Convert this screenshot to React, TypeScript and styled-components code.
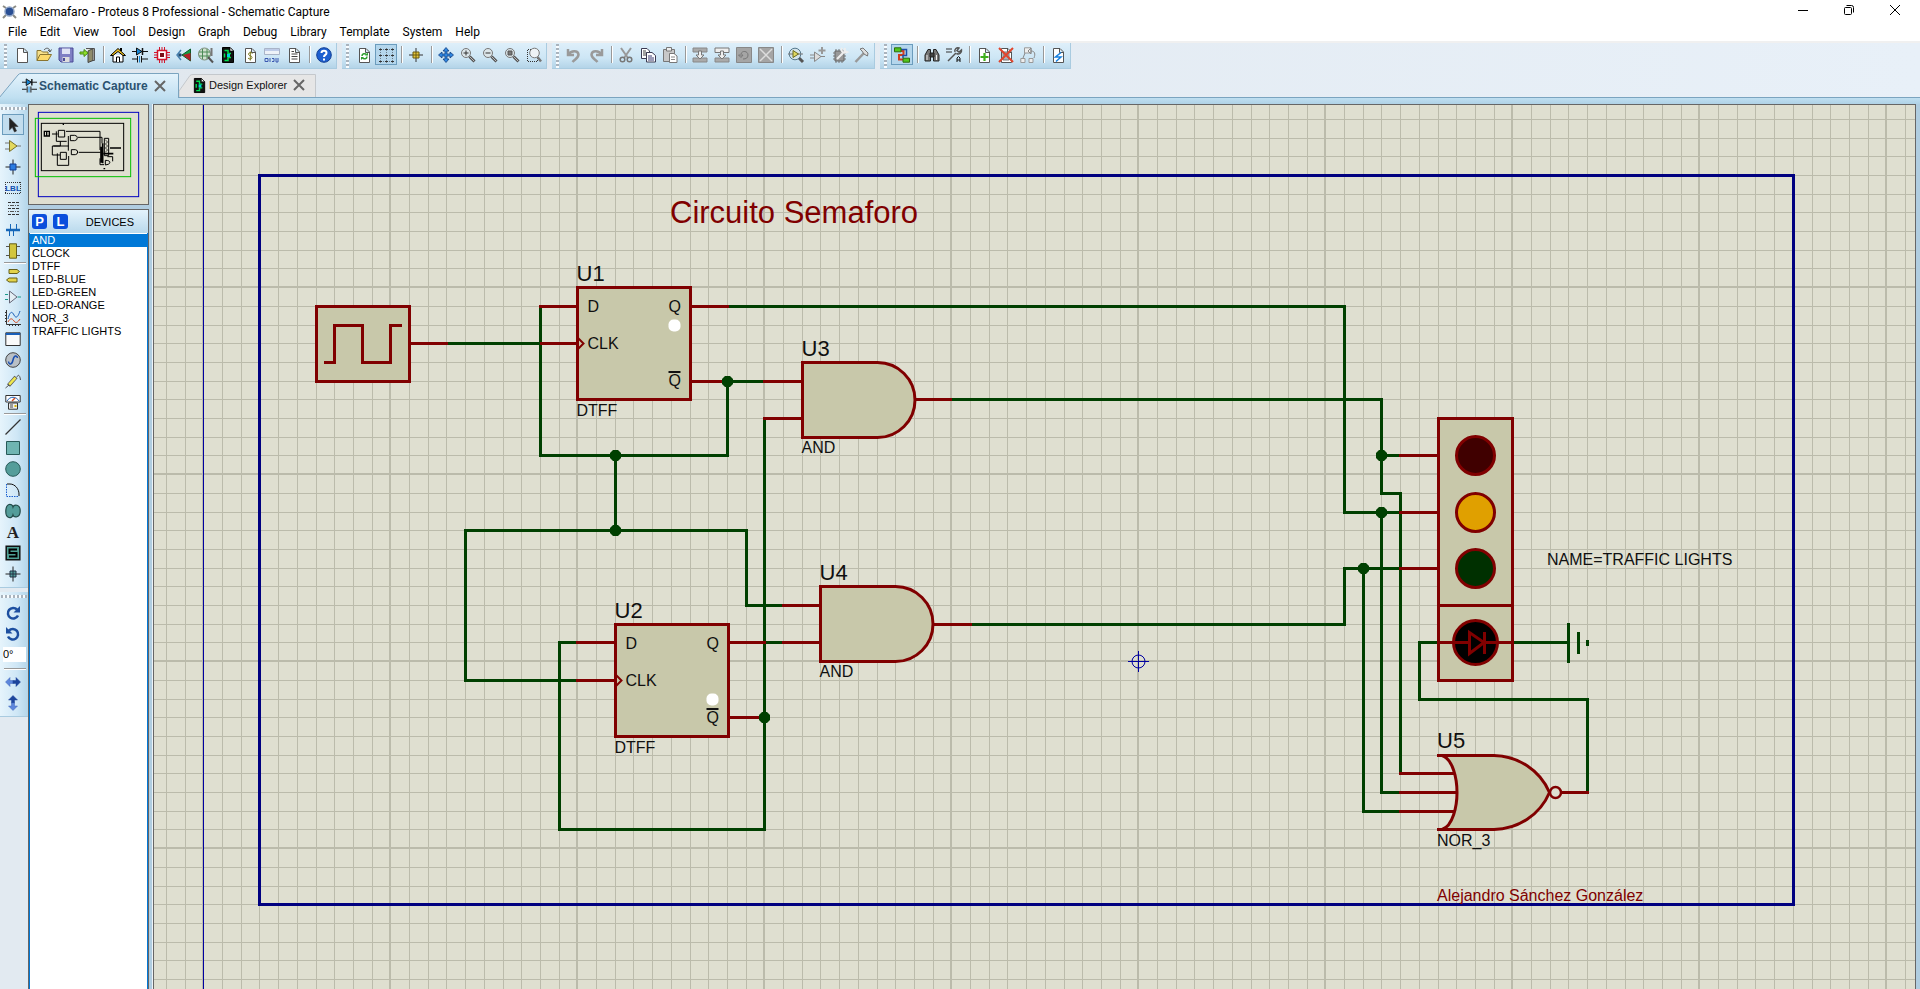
import React from "react";
import styled, { createGlobalStyle, css } from "styled-components";

const GlobalStyle = createGlobalStyle`
  * { box-sizing: border-box; }
  html, body, #root { height: 100%; }
  body { margin: 0; overflow: hidden; background: #fff; }
  button, input { font: inherit; color: inherit; margin: 0; padding: 0; border: 0; background: none; }
`;

const sans = `"Liberation Sans", Arial, sans-serif`;
const ui = `Roboto, "Segoe UI", sans-serif`;

/* ---------- frame ---------- */

const Shell = styled.div`
  display: flex;
  flex-direction: column;
  height: 100vh;
  font-family: ${sans};
  font-size: 11px;
  color: #000;
`;

const TitleBar = styled.header`
  display: flex;
  align-items: center;
  gap: 6px;
  flex: none;
  height: 23px;
  padding-left: 2px;
  background: #fff;
`;

const AppTitle = styled.h1`
  flex: 1;
  margin: 0;
  font: 400 12px/20px ${ui};
`;

const WindowButtons = styled.div`
  display: flex;
  align-self: flex-start;
  margin-right: 2px;
`;

const WindowButton = styled.button`
  display: grid;
  place-items: center;
  width: 46px;
  height: 20px;
`;

const MenuBar = styled.nav`
  display: flex;
  gap: 13px;
  flex: none;
  height: 20px;
  padding-left: 8px;
  background: #fff;
  border-bottom: 2px solid #f0f0f0;
`;

const MenuItem = styled.button`
  padding-top: 1px;
  font: 400 12px/17px ${ui};
  white-space: nowrap;
`;

const ToolRow = styled.div`
  display: flex;
  gap: 5px;
  flex: none;
  height: 30px;
  background: linear-gradient(90deg, #e0e7ee, #e8f0f8);
`;

const Bar = styled.div`
  display: flex;
  align-items: center;
  height: 26px;
  padding-right: 1px;
  border-right: 1px solid #a9cbe0;
  border-bottom: 1px solid #a9cbe0;
  background: linear-gradient(#deeffa, #cde6f5 60%, #b4d4e8);
`;

const Grip = styled.span<{ $across?: boolean }>`
  flex: none;
  ${(p) =>
    p.$across
      ? css`
          width: 26px;
          height: 3px;
          margin: 3px 0 4px 1px;
          background: repeating-linear-gradient(90deg, #a9b3bd 0 2px, #f8fcff 2px 4px);
        `
      : css`
          width: 3px;
          height: 24px;
          margin: 0 4px;
          background: repeating-linear-gradient(#a9b3bd 0 2px, #f8fcff 2px 4px);
        `}
`;

const Divider = styled.span<{ $across?: boolean }>`
  flex: none;
  background: #999;
  ${(p) =>
    p.$across
      ? css`
          width: 22px;
          height: 1px;
          margin: 1px 0 2px 4px;
          box-shadow: 0 1px #fff;
        `
      : css`
          width: 1px;
          height: 17px;
          margin: 0 3px 2px 4px;
          box-shadow: 1px 0 #fff;
        `}
`;

const ToolButton = styled.button<{ $on?: boolean }>`
  display: grid;
  place-items: center;
  flex: none;
  width: 22px;
  height: 21px;
  margin-bottom: 2px;
  border: 1px solid ${(p) => (p.$on ? "#6b9cbd" : "transparent")};
  background: ${(p) => (p.$on ? "#b4d6ec" : "none")};
`;

const ModeButton = styled(ToolButton)`
  margin: 0 0 0 2px;
  background: ${(p) => (p.$on ? "#c2ddee" : "none")};
`;

const TabRow = styled.div`
  display: flex;
  flex: none;
  height: 25px;
  border-bottom: 1px solid #7ba4bf;
  background: linear-gradient(90deg, #e0e7ee, #e8f0f8);
`;

const Tab = styled.div<{ $active?: boolean }>`
  position: relative;
  display: flex;
  align-items: center;
  gap: 1px;
  height: ${(p) => (p.$active ? 25 : 24)}px;
  width: ${(p) => (p.$active ? 179 : 137)}px;
  padding-left: ${(p) => (p.$active ? 22 : 13)}px;
  color: ${(p) => (p.$active ? "#2b5270" : "#111")};
  font: ${(p) => (p.$active ? "700 12px" : "400 11px")} / 24px ${sans};
  white-space: nowrap;
`;

const TabShape = styled.svg`
  position: absolute;
  inset: 0;
  width: 100%;
  height: 100%;
`;

const TabButton = styled.button`
  position: relative;
  display: flex;
  align-items: center;
  gap: 2px;
`;

const TabClose = styled.button`
  position: relative;
  display: grid;
  place-items: center;
  width: 22px;
  height: 22px;
`;

const Band = styled.div`
  flex: none;
  height: 6px;
  background: linear-gradient(#bfdff1, #b0d2e6);
`;

const Body = styled.main`
  display: flex;
  flex: 1;
  min-height: 0;
  background: #b0cde0;
`;

const ModeRail = styled.div`
  display: flex;
  flex-direction: column;
  flex: none;
  width: 28px;
  background: #e2eaf1;
`;

const ModeGroup = styled.div`
  display: flex;
  flex-direction: column;
  margin-bottom: 4px;
  padding-bottom: 3px;
  border-bottom: 1px solid #a9cbe0;
  background: linear-gradient(90deg, #e6f4fc, #cfe7f6 60%, #b4d6ea);
`;

const AngleInput = styled.input`
  width: 23px;
  height: 15px;
  margin: 3px 0 5px 3px;
  background: #fff;
  font: 400 11px/15px ${sans};
`;

const SidePanel = styled.aside`
  display: flex;
  flex-direction: column;
  gap: 4px;
  flex: none;
  width: 121px;
`;

const Overview = styled.div`
  flex: none;
  height: 101px;
  border: 1px solid #666;
  background: #dfdfd0;
`;

const DevicePanel = styled.section`
  display: flex;
  flex-direction: column;
  flex: 1;
  border: 1px solid #666;
  border-bottom: 0;
`;

const DeviceHeader = styled.div`
  display: flex;
  align-items: center;
  flex: none;
  height: 23px;
  padding-left: 3px;
  gap: 6px;
  background: linear-gradient(#e4f3fc, #b9d9ec);
`;

const LetterButton = styled.button`
  width: 15px;
  height: 15px;
  border-radius: 3px;
  background: #0a4fdc;
  color: #fff;
  font: 700 13px/15px ${sans};
  text-align: center;
`;

const DeviceTitle = styled.h2`
  flex: 1;
  margin: 0 14px 0 0;
  text-align: right;
  font: 400 11px/20px ${sans};
`;

const DeviceList = styled.ul`
  flex: 1;
  margin: 0;
  padding: 1px 0 0;
  list-style: none;
  border: solid #0078d7;
  border-width: 0 1px;
  background: #fff;
`;

const Device = styled.li<{ $selected?: boolean }>`
  padding-left: 2px;
  font-size: 11px;
  line-height: 13px;
  white-space: nowrap;
  color: ${(p) => (p.$selected ? "#fff" : "#000")};
  background: ${(p) => (p.$selected ? "#0078d7" : "none")};
`;

const CanvasFrame = styled.section`
  flex: 1;
  min-width: 0;
  margin: 0 4px;
  border: 1px solid #666;
  border-bottom: 0;
  box-shadow: -1px 0 #eef4f8;
  background: #dfdfd0;
`;

const Drawing = styled.svg`
  display: block;
  width: 100%;
  height: 100%;
`;

const Label = styled.text<{ $size?: number; $ink?: string }>`
  font-family: ${sans};
  font-size: ${(p) => p.$size ?? 16}px;
  fill: ${(p) => p.$ink ?? "#101010"};
`;

/* ---------- icons, drawn on a 16 unit grid ---------- */

const IconSvg = styled.svg`
  overflow: visible;
`;

const Icon = ({ children, size = 18 }: { children: React.ReactNode; size?: number }) => (
  <IconSvg width={size} height={size} viewBox="0 0 16 16" fill="none" stroke="#444" aria-hidden>
    {children}
  </IconSvg>
);

const sheet = <path d="M3.5 1.5H10L13.5 5V15.5H3.5ZM9.5 1.5V5.5H13.5" fill="#fff" stroke="#555" />;
const lens = (
  <>
    <path d="M9.5 9.5L14.5 14.5" stroke="#555" strokeWidth="3" />
    <path d="M10 10L14 14" stroke="#bbb" />
    <circle cx="6" cy="6" r="4.5" fill="#dce6ea" stroke="#777" />
  </>
);
const circuitSheet = (
  <>
    <path d="M2.5 .5H10L13.5 4V15.5H2.5Z" fill="#111" stroke="#000" />
    <path d="M10 .5V4H13.5Z" fill="#fff" stroke="#000" strokeWidth=".6" />
    <path d="M4.5 3.5H8V6.5H11M11 10.5H8V13.5H4.5M4.5 6.5V10.5" stroke="#00e050" strokeWidth="1.5" />
    <path d="M7 7h3v3h-3z" fill="#00d0e0" stroke="none" />
  </>
);
const diodeCap = (
  <>
    <path d="M0 4.5H16M0 12H5M10 12H16" stroke="#111" />
    <path d="M4.5 1V8L10 4.5Z" fill="#1688d8" stroke="#111" />
    <path d="M10.5 1V8" stroke="#111" strokeWidth="1.5" />
    <path d="M5.5 9V15.5M9.5 9V15.5" stroke="#111" />
    <path d="M7.5 9V15.5" stroke="#1688d8" />
  </>
);
const downArrow = <path d="M6.5 4H9.5V8H12L8 12L4 8H6.5Z" fill="#eee" stroke="#777" />;

const icons: Record<string, React.ReactNode> = {
  New: sheet,
  Open: (
    <>
      <path d="M1 13.5V3.5H5L6.5 5H12V7" fill="#f6e08a" stroke="#8a7530" />
      <path d="M1 13.5L4 7.5H15.5L12 13.5Z" fill="#fbd96a" stroke="#8a7530" />
      <path d="M8 3C10 .5 13 .5 14 4M12 3L14 5L15.5 2.5" stroke="#555" />
    </>
  ),
  Save: (
    <>
      <path d="M1 1H15V15H3L1 13Z" fill="#7f7fc4" stroke="#4b4b96" />
      <path d="M4 1.5H12V7H4Z" fill="#dfe3f5" stroke="none" />
      <path d="M4.5 10H11.5V15H4.5Z" fill="#ddd" stroke="none" />
      <path d="M6 11V14" stroke="#4b4b96" strokeWidth="2" />
    </>
  ),
  Close: (
    <>
      <path d="M6 1.5H14.5V13.5H11" fill="#e8e8e0" stroke="#555" />
      <path d="M8 4L13 1.5V13.5L8 15.5Z" fill="#8f8b6a" stroke="#444" />
      <path d="M0 5H4V2.5L8 6L4 9.5V7H0Z" fill="#8ee02a" stroke="#4a8a10" />
    </>
  ),
  Home: (
    <>
      <path d="M3 8V15H13V8" fill="#fff" stroke="#000" />
      <path d="M.5 8.5L8 1.5L15.5 8.5H13L8 4.5L3 8.5Z" fill="#f7c51e" stroke="#000" />
      <path d="M11 1V4" stroke="#000" strokeWidth="2" />
      <path d="M6.5 15V10H9.5V15" fill="#fff" stroke="#000" />
    </>
  ),
  "Schematic Capture": diodeCap,
  "PCB Layout": (
    <>
      <path d="M5.5 0V16M8 0V16M10.5 0V16M0 5.5H16M0 8H16M0 10.5H16" stroke="#d2162c" />
      <path d="M3.5 3.5H12.5V12.5H3.5Z" fill="#fff" stroke="#d2162c" strokeWidth="1.5" />
      <path d="M6 6H10V10H6Z" fill="#7a0d16" stroke="none" />
    </>
  ),
  "3D Visualizer": (
    <>
      <path d="M6 8L14.5 2V14Z" fill="#169c43" stroke="#0a5c2a" />
      <path d="M7 8L14.5 6V14Z" fill="#b4202a" stroke="none" />
      <path d="M5 3L1 8L5 13" stroke="#4a82b0" strokeWidth="1.5" />
      <circle cx="4" cy="8" r="1.8" fill="#1d4870" stroke="none" />
    </>
  ),
  "Gerber Viewer": (
    <>
      <circle cx="6.5" cy="7" r="6" fill="#cfe0cf" stroke="#7a8c7a" />
      <path d="M1 5H12M1 9H12M4.5 2V12M9 2V12" stroke="#4a8a55" />
      <path d="M13.5 1V9" stroke="#777" strokeWidth="2" />
      <path d="M10 10L15 15.5" stroke="#555" strokeWidth="2" />
    </>
  ),
  "Design Explorer": circuitSheet,
  "Bill of Materials": (
    <>
      {sheet}
      <path d="M10.5 6.5C9.5 5 6 5.5 6.5 7.5C7 9 10 8.5 10 10.5C10 12.5 7 12.5 6 11M8.3 4.5V13.5" stroke="#7c7a20" />
    </>
  ),
  "Source Code": (
    <>
      <path d="M.5 1.5H15.5V7.5H.5Z" fill="#eef2f8" stroke="#a9b4c8" />
      <path d="M1 3H15" stroke="#8fa5d8" />
      <path d="M1 11.5H4V14.5H1ZM6 11V15M8 11.5H10V14.5H8M12 11V15H14V11" stroke="#3b58b0" />
    </>
  ),
  "Project Notes": (
    <>
      {sheet}
      <path d="M5.5 7H11.5M5.5 9.5H11.5M5.5 12H11.5M5.5 4.5H8" />
    </>
  ),
  Help: (
    <>
      <circle cx="8" cy="8" r="7.3" fill="#1d5fd0" stroke="#123f94" />
      <path d="M5.5 6C5.5 3 10.5 3 10.5 6C10.5 8 8 7.8 8 10" stroke="#fff" strokeWidth="2" />
      <path d="M8 11.5V13.5" stroke="#fff" strokeWidth="2" />
    </>
  ),
  Redraw: (
    <>
      {sheet}
      <path d="M6 9C6 6.5 9 6 10.5 7.5M11 9.5C11 12 8 12.5 6.5 11" stroke="#2e9e2e" strokeWidth="1.5" />
      <path d="M9 8.5H12V5.5ZM8 10H5V13Z" fill="#2e9e2e" stroke="none" />
    </>
  ),
  "Toggle Grid": (
    <>
      <path d="M1 2.5H16M1 8.5H16M1 14.5H16M2.5 1V16M8.5 1V16M14.5 1V16" stroke="#6b7d8a" strokeDasharray="1 1" />
      <path d="M1 2.5H4M7 2.5H10M13 2.5H16M1 8.5H4M7 8.5H10M13 8.5H16M1 14.5H4M7 14.5H10M13 14.5H16" stroke="#333" />
    </>
  ),
  "False Origin": (
    <>
      <path d="M8 1V15M1 8H15" stroke="#333" />
      <path d="M5 5H11V11H5Z" fill="#e6c63a" stroke="#6b5a10" />
      <path d="M8 5V11M5 8H11" stroke="#6b5a10" />
    </>
  ),
  "Center at Cursor": (
    <path
      d="M8 .5L11 4H9V7H12V5L15.5 8L12 11V9H9V12H11L8 15.5L5 12H7V9H4V11L.5 8L4 5V7H7V4H5Z"
      fill="#2f86e0"
      stroke="#123f80"
      strokeWidth=".8"
    />
  ),
  "Zoom In": <>{lens}<path d="M3.5 6H8.5M6 3.5V8.5" stroke="#333" /></>,
  "Zoom Out": <>{lens}<path d="M3.5 6H8.5" stroke="#333" /></>,
  "Zoom All": <>{lens}<path d="M4 4H8V8H4Z" fill="#777" stroke="#555" /></>,
  "Zoom Area": (
    <>
      <path d="M9 2.5H1.5V14.5H11.5V11" stroke="#333" strokeDasharray="1 1" />
      <path d="M11.5 10L15 14.5" stroke="#777" strokeWidth="2.5" />
      <circle cx="8.5" cy="6" r="4.8" fill="#eef3f6" stroke="#777" />
    </>
  ),
  Undo: <path d="M2 2V8H8M2.5 7.5C5 3 12 3 12.5 7.5C12.5 11 9 12 6.5 15" stroke="#9a9a9a" strokeWidth="2.5" />,
  Redo: <path d="M14 2V8H8M13.5 7.5C11 3 4 3 3.5 7.5C3.5 11 7 12 9.5 15" stroke="#9a9a9a" strokeWidth="2.5" />,
  Cut: (
    <>
      <path d="M3 1L10 11M13 1L6 11" stroke="#999" strokeWidth="2" />
      <circle cx="4.5" cy="12.5" r="2.3" stroke="#777" strokeWidth="1.5" />
      <circle cx="11.5" cy="12.5" r="2.3" stroke="#777" strokeWidth="1.5" />
    </>
  ),
  Copy: (
    <>
      <path d="M1.5 1.5H7L9.5 4V11.5H1.5Z" fill="#fff" stroke="#3a3a52" />
      <path d="M3 4H6M3 6H7M3 8H6" />
      <path d="M6.5 5.5H12L15.5 8.5V15H6.5Z" fill="#fff" stroke="#3a3a52" />
      <path d="M8 9H12M8 11H14M8 13H14" stroke="#3a3a72" />
    </>
  ),
  Paste: (
    <>
      <path d="M1.5 2.5H12.5V14.5H1.5Z" fill="#c8c8c8" stroke="#777" />
      <path d="M4.5 .5H9.5V4H4.5Z" fill="#eee" stroke="#777" />
      <path d="M7.5 6.5H12L15 9V15.5H7.5Z" fill="#fff" stroke="#777" />
      <path d="M9 10H13M9 12.5H13" stroke="#888" />
    </>
  ),
  "Block Copy": (
    <>
      <path d="M1 1H15V5H1ZM1 11H15V15H1Z" fill="#aaa" stroke="#888" />
      {downArrow}
    </>
  ),
  "Block Move": (
    <>
      <path d="M1 1H15V5.5H1Z" fill="#eee" stroke="#777" />
      <path d="M1 11H15V15H1Z" fill="#aaa" stroke="#888" />
      {downArrow}
    </>
  ),
  "Block Rotate": (
    <>
      <path d="M.5 .5H15.5V15.5H.5Z" fill="#a5a5a5" stroke="#888" />
      <path d="M2.5 8H7L5 10.5ZM5 7C6 3 12 4 12 8C12 11 10 12 7 12" stroke="#777" />
    </>
  ),
  "Block Delete": (
    <>
      <path d="M.5 .5H15.5V15.5H.5Z" fill="#a5a5a5" stroke="#888" />
      <path d="M2 2L14 14M14 2L2 14" stroke="#ddd" strokeWidth="1.5" />
    </>
  ),
  "Pick Parts": (
    <>
      <path d="M10 10L15 15" stroke="#555" strokeWidth="3" />
      <circle cx="7" cy="7" r="5.8" fill="#d5e4ea" stroke="#56788c" />
      <path d="M0 7H15" stroke="#777" />
      <path d="M5 3.5V10.5L10.5 7Z" fill="#e0d860" stroke="#6b6a20" />
    </>
  ),
  "Make Device": (
    <>
      <path d="M0 8H4M0 11H4M10 9.5H15" stroke="#888" />
      <path d="M4.5 5V14.5L11 9.5Z" fill="#ddd" stroke="#888" />
      <path d="M12 0V7M8.5 3.5H15.5" stroke="#999" strokeWidth="2" />
    </>
  ),
  "Packaging Tool": (
    <>
      <path d="M4 2V16M7 2V16M10 2V16M1 6H14M1 9H14M1 12H14" stroke="#777" />
      <path d="M3 4H12V14H3Z" fill="#999" stroke="#666" />
      <path d="M5 12L11 6M10 1C8.5 4 11 7 15 5L12.5 4L13 1" stroke="#eee" strokeWidth="2" />
    </>
  ),
  Decompose: (
    <>
      <path d="M1.5 15L10 6" stroke="#999" strokeWidth="2.5" />
      <path d="M6 2L9 1L14 6L13.5 9L10 7L8 4Z" fill="#ddd" stroke="#777" />
    </>
  ),
  "Wire Autorouter": (
    <>
      <path d="M7 4H9.5V8H5V12.5H9" stroke="#d23b1e" strokeWidth="2" />
      <path d="M7 2.5H12.5V8.5H9V11" stroke="#1d4fa8" strokeWidth="1.5" />
      <path d="M.5 .8H7V4.8H.5ZM9 11.2H15.5V15.2H9Z" fill="#53c61c" stroke="#2b6d0c" />
    </>
  ),
  "Search and Tag": (
    <>
      <path d="M1 14V8L4 2.5H6.5V14ZM15 14V8L12 2.5H9.5V14Z" fill="#777" stroke="#222" />
      <path d="M6 6H10V10H6Z" fill="#444" stroke="#222" />
      <path d="M3 8V13M12.5 8V13" stroke="#eee" />
    </>
  ),
  "Property Assignment": (
    <>
      <path d="M0 2H6M0 5H6" stroke="#333" />
      <path d="M2 14L10 6M9 5C8 2 11 0 13 1L11 3.5L13 5L15.5 3C16 6 13 8 10.5 6.5" stroke="#555" strokeWidth="1.5" />
      <path d="M11 15V11L12.5 9.5L14 11V15M11 13H14" stroke="#111" />
    </>
  ),
  "New Sheet": <>{sheet}<path d="M8.5 6V14M4.5 10H12.5" stroke="#3fae1c" strokeWidth="2.2" /></>,
  "Remove Sheet": (
    <>
      {sheet}
      <path d="M5 5H11V13H5Z" fill="#a9b0b8" stroke="#777" />
      <path d="M1 1L15 15M15 1L1 15" stroke="#e0452c" strokeWidth="2" />
    </>
  ),
  "Exit to Parent": (
    <>
      <path d="M4.5 .8H11V6H4.5ZM.8 11.5H5V15.5H.8ZM9 11.5H13V15.5H9Z" fill="#eee" stroke="#999" />
      <path d="M5 6L3 11M11 4C15 4 15.5 7 14 11M11 1V7L8 4Z" stroke="#888" />
    </>
  ),
  "Electrical Check": <>{sheet}<path d="M11 5.5L5.5 10H11L6 14.5" stroke="#1580e0" strokeWidth="1.5" /></>,

  Selection: <path d="M4.5 1V13L7.3 10.3L9.5 15L11.5 14L9.5 9.5H13Z" fill="#222" stroke="#333" strokeWidth=".6" />,
  Component: (
    <>
      <path d="M0 5H5M0 11H5M11 8H16" stroke="#777" />
      <path d="M4.5 2.5V13.5L12 8Z" fill="#e3d95e" stroke="#77702a" />
    </>
  ),
  "Junction Dot": (
    <>
      <path d="M8 .5V15.5M.5 8H15.5" stroke="#222" />
      <path d="M5 5H11V11H5Z" fill="#2a7be0" stroke="#123f94" />
    </>
  ),
  "Text Script": (
    <>
      <path d="M3 1.5H14M3 7.5H14M3 13.5H14" stroke="#333" strokeDasharray="3 1" />
      <path d="M3 4.5H14M3 10.5H14" stroke="#555" strokeDasharray="1 1 4 1" />
    </>
  ),
  Bus: (
    <>
      <path d="M1 8H15" stroke="#1566b8" strokeWidth="2.5" />
      <path d="M5.5 2V8M11.5 2V8M4.5 8V14M8.5 8V14" stroke="#1566b8" />
    </>
  ),
  Subcircuit: (
    <>
      <path d="M1 3.5H15M1 12.5H15" stroke="#555" />
      <path d="M4.5 .8H11.5V15.2H4.5Z" fill="#d2c63e" stroke="#66601a" />
    </>
  ),
  Terminals: (
    <path d="M4 1.5H12L14.5 3.5L12 5.5H4ZM12 10H4L1.5 12L4 14H12Z" fill="#e3d34a" stroke="#66601a" />
  ),
  "Device Pins": (
    <>
      <path d="M0 5.5H3M0 10.5H3M12.5 8H16" stroke="#1a9a8a" />
      <path d="M4.5 2V14L12 8Z" stroke="#667" fill="#e4eef4" />
    </>
  ),
  Graph: (
    <>
      <path d="M1.5 0V14.5H16" stroke="#333" />
      <path d="M0 2.5H1M0 5.5H1M0 8.5H1M0 11.5H1M4.5 15V16M7.5 15V16M10.5 15V16M13.5 15V16" stroke="#333" />
      <path d="M3 9C5 1 7 1 9 5S13 7 15 1" stroke="#1a5fb8" />
      <path d="M3 12C5 8 7 8 9 11S13 12 15 9" stroke="#d24a1e" />
    </>
  ),
  "Active Popup": (
    <>
      <path d="M.8 1.8H15.2V14.5H.8Z" fill="#fafafa" stroke="#333" />
      <path d="M.8 3H15.2" stroke="#1a5fb8" strokeWidth="2" />
    </>
  ),
  Generator: (
    <>
      <circle cx="8" cy="8" r="7.3" fill="#b9c0c6" stroke="#444" />
      <path d="M3.5 9.5C4 13 7 13 8 8S12 3 12.5 6" stroke="#1a4fb0" strokeWidth="1.5" />
    </>
  ),
  Probe: (
    <>
      <path d="M.5 15L4 12M12 4C13 1 15 2 15.5 7" stroke="#555" />
      <path d="M3.5 12.5L11 4" stroke="#555" strokeWidth="4" />
      <path d="M4.2 11.7L10.5 4.6" stroke="#efe84e" strokeWidth="2.5" />
    </>
  ),
  Instruments: (
    <>
      <path d="M.8 1.5H15.2V8H.8Z" fill="#fff" stroke="#333" />
      <path d="M2 7C5 2 11 2 14 7" stroke="#1a5fb8" />
      <path d="M7 7L10 4" stroke="#d24a1e" strokeWidth="1.5" />
      <path d="M3.5 9H12.5V15.2H3.5Z" fill="#eee" stroke="#333" />
      <path d="M5 11H8M5 13H8" /><path d="M9.5 12H11.5" stroke="#d8b400" strokeWidth="2" />
    </>
  ),
  "2D Line": <path d="M.5 15.5L15.5 .5" stroke="#333" strokeWidth="1.2" />,
  "2D Box": <path d="M1.5 1.5H14.5V14.5H1.5Z" fill="#6fb5b2" stroke="#285a58" />,
  "2D Circle": <circle cx="8" cy="8" r="7.3" fill="#549d9a" stroke="#285a58" />,
  "2D Arc": (
    <>
      <path d="M1.5 2V14.5H14" stroke="#1a5fd0" strokeDasharray="1.5 1" />
      <path d="M2 2H5C10 2 14 7 14 12V14" stroke="#111" />
    </>
  ),
  "2D Path": (
    <path
      d="M8 4C7 0 1 0 .8 8S7 16 8 12C9 15 15.2 15 15.2 8S9 1 8 4Z"
      fill="#549d9a"
      stroke="#224a48"
      strokeWidth="1.2"
    />
  ),
  Symbol: (
    <>
      <path d="M1.2 1.2H14.8V14.8H1.2Z" fill="#4fa094" stroke="#111" strokeWidth="1.5" />
      <path d="M12 4.5H4.5V8H11.5V11.5H4" stroke="#000" strokeWidth="2" />
    </>
  ),
  Marker: (
    <>
      <path d="M8 .5V15.5M.5 8H15.5" stroke="#222" />
      <path d="M5 5H11V11H5Z" fill="#549d9a" stroke="#234" />
      <path d="M8 5V11M5 8H11" stroke="#234" />
    </>
  ),
  "Rotate Clockwise": (
    <>
      <path d="M12 4.5A5.3 5.3 0 1 0 13 10.5" stroke="#1d4fa0" strokeWidth="2.5" />
      <path d="M15 1V7.5H8.5Z" fill="#1d4fa0" stroke="none" />
    </>
  ),
  "Rotate Anticlockwise": (
    <>
      <path d="M4 4.5A5.3 5.3 0 1 1 3 10.5" stroke="#1d4fa0" strokeWidth="2.5" />
      <path d="M1 1V7.5H7.5Z" fill="#1d4fa0" stroke="none" />
    </>
  ),
  "X Mirror": (
    <>
      <path d="M8 6.5H5V3.5L.5 8L5 12.5V9.5H8Z" fill="#5c86dc" stroke="#4468b8" strokeWidth=".5" />
      <path d="M8 6.5H11V3.5L15.5 8L11 12.5V9.5H8Z" fill="#1d459c" stroke="#1d459c" strokeWidth=".5" />
    </>
  ),
  "Y Mirror": (
    <>
      <path d="M6.5 8V5H3.5L8 .5L12.5 5H9.5V8Z" fill="#1d459c" stroke="#1d459c" strokeWidth=".5" />
      <path d="M6.5 8V11H3.5L8 15.5L12.5 11H9.5V8Z" fill="#5c86dc" stroke="#4468b8" strokeWidth=".5" />
    </>
  ),
};

const IconText = styled.text<{ $serif?: boolean }>`
  font: ${(p) => (p.$serif ? `700 17px/1 "Liberation Serif", serif` : `700 8px/1 ${sans}`)};
  text-anchor: middle;
  stroke: none;
  fill: ${(p) => (p.$serif ? "#222" : "#0f4fb0")};
`;

icons["Wire Label"] = (
  <>
    <path d="M0 2.5H16M0 13.5H16M.5 2V14M15.5 2V14" stroke="#333" strokeDasharray="1 1" />
    <IconText x="8" y="11">LBL</IconText>
  </>
);
icons["2D Text"] = <IconText $serif x="8" y="14">A</IconText>;

/* ---------- toolbars ---------- */

const toolbars: string[][] = [
  ["New", "Open", "Save", "Close", "|", "Home", "Schematic Capture", "PCB Layout", "3D Visualizer", "Gerber Viewer",
    "Design Explorer", "Bill of Materials", "Source Code", "Project Notes", "|", "Help"],
  ["Redraw", "Toggle Grid", "|", "False Origin", "|", "Center at Cursor", "Zoom In", "Zoom Out", "Zoom All", "Zoom Area"],
  ["Undo", "Redo", "|", "Cut", "Copy", "Paste", "|", "Block Copy", "Block Move", "Block Rotate", "Block Delete", "|",
    "Pick Parts", "Make Device", "Packaging Tool", "Decompose"],
  ["Wire Autorouter", "|", "Search and Tag", "Property Assignment", "|", "New Sheet", "Remove Sheet", "Exit to Parent",
    "|", "Electrical Check"],
];

const modes = ["Selection", "Component", "Junction Dot", "Wire Label", "Text Script", "Bus", "Subcircuit", "|", "Terminals",
  "Device Pins", "Graph", "Active Popup", "Generator", "Probe", "Instruments", "|", "2D Line", "2D Box", "2D Circle",
  "2D Arc", "2D Path", "2D Text", "Symbol", "Marker"];

const pressed = new Set(["Toggle Grid", "Wire Autorouter", "Selection"]);

const Modes = ({ names }: { names: string[] }) => (
  <>
    {names.map((n, i) =>
      n === "|" ? (
        <Divider $across key={i} />
      ) : (
        <ModeButton key={n} aria-label={n} $on={pressed.has(n)}>
          <Icon size={16}>{icons[n]}</Icon>
        </ModeButton>
      ),
    )}
  </>
);

/* ---------- schematic ---------- */

const GREEN = "#004000";
const RED = "#800000";
const FILL = "#c8c8aa";

const columns = [19, 38, 56, 75, 94, 113, 131, 150, 169];
const rows = [19, 38, 56, 75, 94, 112, 131, 150, 168];

const GridPattern = () => (
  <pattern id="grid" x="202" y="286" width="187" height="187" patternUnits="userSpaceOnUse">
    <g fill="#bbbbab" shapeRendering="crispEdges">
      {columns.map((c) => (
        <rect key={c} x={c + 1} width="1" height="187" />
      ))}
      {rows.map((r) => (
        <rect key={r} y={r + 1} width="187" height="1" />
      ))}
      <rect width="2" height="187" />
      <rect width="187" height="2" />
    </g>
  </pattern>
);

const Node = ({ x, y }: { x: number; y: number }) => (
  <path d={`M${x - 2.5} ${y - 5.5}h5l3 3v5l-3 3h-5l-3-3v-5z`} fill={GREEN} stroke="none" />
);

const FlipFlop = ({ x, y, name, litY }: { x: number; y: number; name: string; litY: number }) => (
  <g>
    <rect x={x} y={y} width="113" height="112" fill={FILL} />
    <path d={`M${x} ${y + 50}l6 6l-6 6`} strokeWidth="2" />
    <rect x={x + 91} y={litY - 6} width="12" height="12" rx="5" fill="#fff" stroke="none" />
    <path d={`M${x + 91} ${y + 84.5}h12`} stroke="#101010" strokeWidth="2" />
    <g stroke="none">
      <Label x={x - 1} y={y - 7} $size={22}>{name}</Label>
      <Label x={x + 10} y={y + 24}>D</Label>
      <Label x={x + 10} y={y + 61}>CLK</Label>
      <Label x={x + 91} y={y + 24}>Q</Label>
      <Label x={x + 91} y={y + 98}>Q</Label>
      <Label x={x - 1} y={y + 128}>DTFF</Label>
    </g>
  </g>
);

const AndGate = ({ x, y, name }: { x: number; y: number; name: string }) => (
  <g>
    <path d={`M${x} ${y}h75a37.5 37.5 0 0 1 0 75h-75z`} fill={FILL} />
    <g stroke="none">
      <Label x={x - 1} y={y - 7} $size={22}>{name}</Label>
      <Label x={x - 1} y={y + 90}>AND</Label>
    </g>
  </g>
);

const Schematic = () => (
  <Drawing role="img" aria-label="Traffic light schematic">
    <g transform="translate(-154 -105)">
      <defs>
        <GridPattern />
      </defs>
      <rect x="154" y="105" width="100%" height="100%" fill="url(#grid)" />
      <path d="M203.5 105V3000" stroke="#0000a0" />
      <rect x="259.5" y="175.5" width="1534" height="729" fill="none" stroke="#000080" strokeWidth="3" />

      <g fill="none" stroke={GREEN} strokeWidth="3" strokeLinecap="square">
        <path d="M448 343.5H540" />
        <path d="M540.5 306.5V455.5H727.5V381.5H763" />
        <path d="M730 306.5H1344.5V512.5H1399" />
        <path d="M615.5 455.5V530.5" />
        <path d="M576 680.5H465.5V530.5H746.5V605.5H782" />
        <path d="M764.5 418.5V829.5H559.5V642.5H576" />
        <path d="M765 642.5H782" />
        <path d="M952 399.5H1381.5V493.5H1400.5V773.5" />
        <path d="M1381.5 455.5H1399" />
        <path d="M972 624.5H1344.5V568.5H1399" />
        <path d="M1381.5 512.5V792.5H1399" />
        <path d="M1363.5 568.5V811.5H1399" />
        <path d="M1437 642.5H1419.5V699.5H1587.5V792.5" />
        <path d="M1514 642.5H1568.5M1568.5 624.5V661.5M1578.5 633.5V652.5M1587.5 641.5V644.5" />
      </g>

      <g fill="none" stroke={RED} strokeWidth="3">
        <path d="M410 343.5H448M539 306.5H577M540 343.5H577M691 306.5H729M691 381.5H727M763 381.5H802M763 418.5H802M915 399.5H952" />
        <path d="M782 605.5H820M782 642.5H820M728 642.5H766M728 717.5H764M576 642.5H615M576 680.5H615M934 624.5H972" />
        <path d="M1399 455.5H1438M1399 512.5H1438M1399 568.5H1438" />
        <path d="M1399 773.5H1455M1399 792.5H1457M1399 811.5H1455M1562 792.5H1589" />

        <rect x="316.5" y="306.5" width="93" height="75" fill={FILL} />
        <path d="M324 362.5H334.5V325.5H362.5V362.5H390.5V325.5H402" />

        <FlipFlop x={577.5} y={287.5} name="U1" litY={325.5} />
        <FlipFlop x={615.5} y={624.5} name="U2" litY={699.5} />
        <AndGate x={802.5} y={362.5} name="U3" />
        <AndGate x={820.5} y={586.5} name="U4" />

        <path d="M1438.5 418.5H1512.5V680.5H1438.5Z" fill={FILL} />
        <path d="M1438.5 605.5H1512.5" />
        <circle cx="1475.5" cy="455.5" r="19" fill="#400000" />
        <circle cx="1475.5" cy="512.5" r="19" fill="#e0a000" />
        <circle cx="1475.5" cy="568.5" r="19" fill="#003000" />
        <circle cx="1475.5" cy="642.5" r="22" fill="#000" />
        <path d="M1438 642.5H1469M1469.5 632.5V653.5L1484 642.5ZM1484.5 632V654M1484 642.5H1512" />

        <path d="M1437 755.5H1494C1518 756 1540 770 1549.5 792.5C1540 815 1518 829 1494 829.5H1437H1442C1453 826 1457 806 1457 792.5S1453 759 1442 755.5" fill={FILL} />
        <circle cx="1555.5" cy="792.5" r="5.5" fill="#dfdfd0" strokeWidth="2.5" />
      </g>

      <Node x={727.5} y={381.5} />
      <Node x={615.5} y={455.5} />
      <Node x={615.5} y={530.5} />
      <Node x={764.5} y={717.5} />
      <Node x={1381.5} y={455.5} />
      <Node x={1381.5} y={512.5} />
      <Node x={1363.5} y={568.5} />

      <g fill="none" stroke="#0000a0">
        <circle cx="1138.5" cy="661.5" r="6.5" />
        <path d="M1128 661.5H1149M1138.5 651V672" />
      </g>

      <Label x="670" y="223" $size={31} $ink={RED}>Circuito Semaforo</Label>
      <Label x="1437" y="748" $size={22}>U5</Label>
      <Label x="1437" y="846">NOR_3</Label>
      <Label x="1547" y="565">NAME=TRAFFIC LIGHTS</Label>
      <Label x="1437" y="901" $ink={RED}>Alejandro Sánchez González</Label>
    </g>
  </Drawing>
);

const Minimap = () => (
  <svg width="119" height="99" viewBox="87 15 357 297" fill="none" stroke="#000" strokeWidth="4" aria-label="Overview">
    <rect x="115" y="37" width="301" height="253" stroke="#0000c0" strokeWidth="3" />
    <rect x="106" y="55" width="286" height="175" stroke="#00c000" strokeWidth="3" />
    <rect x="124" y="70" width="247" height="142" strokeWidth="3" />
    <path d="M133 94h15v14h-15zM140 96v10M190 70v5" />
    <g strokeWidth="3">
      <path d="M156 102H173M175 91h19v20h-19zM198 94H300V150M169 94V124H200M205 108V152M181 124V138H157V165H180M211 106h13q8 1 8 7q0 8-8 9h-13zM234 112H306V130" />
      <path d="M214 149h12q7 1 7 7q0 7-7 8h-12zM236 157H302M181 157h18v21h-18zM172 160V196H206V168M206 138H160M313 115h13v52h-13zM300 175V194H312M338 184V170H322M316 181q14 0 14 7q-3 6-14 7z" />
    </g>
    <path d="M303 140V188M308 130V190M330 144H363M313 204v4M311 161H340" strokeWidth="5" />
    <path d="M316 120l7 6l-7 6l7 6l-7 6l7 6l-7 6" strokeWidth="2" />
  </svg>
);

const menus = ["File", "Edit", "View", "Tool", "Design", "Graph", "Debug", "Library", "Template", "System", "Help"];
const devices = ["AND", "CLOCK", "DTFF", "LED-BLUE", "LED-GREEN", "LED-ORANGE", "NOR_3", "TRAFFIC LIGHTS"];

const CloseMark = () => (
  <svg width="12" height="12" viewBox="0 0 12 12" stroke="#666" strokeWidth="2" aria-hidden>
    <path d="M1 1L11 11M11 1L1 11" />
  </svg>
);

export default function App() {
  return (
    <Shell>
      <GlobalStyle />
      <TitleBar>
        <svg width="15" height="16" viewBox="0 0 15 16" stroke="#8c8c84" strokeWidth="2" aria-hidden>
          <path d="M1 2L4 4M14 2L11 4M1 14L4 11M14 14L11 11" />
          <circle cx="7.5" cy="7.5" r="4.5" fill="#2a4f94" stroke="#8fa3c4" strokeWidth="1.5" />
        </svg>
        <AppTitle>MiSemafaro - Proteus 8 Professional - Schematic Capture</AppTitle>
        <WindowButtons>
          <WindowButton aria-label="Minimize">
            <svg width="10" height="10" stroke="#000"><path d="M0 5.5H10" /></svg>
          </WindowButton>
          <WindowButton aria-label="Restore">
            <svg width="10" height="10" stroke="#000" fill="none">
              <rect x=".5" y="2.5" width="7" height="7" rx="1" />
              <path d="M2.5 .5H7.5Q9.5 .5 9.5 2.5V7.5" />
            </svg>
          </WindowButton>
          <WindowButton aria-label="Close window">
            <svg width="10" height="10" stroke="#000"><path d="M0 0L10 10M10 0L0 10" /></svg>
          </WindowButton>
        </WindowButtons>
      </TitleBar>

      <MenuBar>
        {menus.map((m) => (
          <MenuItem key={m}>{m}</MenuItem>
        ))}
      </MenuBar>

      <ToolRow>
        {toolbars.map((names, b) => (
          <Bar key={b} role="toolbar">
            <Grip />
            {names.map((n, i) =>
              n === "|" ? (
                <Divider key={i} />
              ) : (
                <ToolButton key={n} aria-label={n} $on={pressed.has(n)}>
                  <Icon size={16}>{icons[n]}</Icon>
                </ToolButton>
              ),
            )}
          </Bar>
        ))}
      </ToolRow>

      <TabRow>
        <Tab $active>
          <TabShape viewBox="0 0 179 25" preserveAspectRatio="none">
            <defs>
              <linearGradient id="tab" x2="0" y2="1">
                <stop stopColor="#e4f3fc" />
                <stop offset="1" stopColor="#bfdff1" />
              </linearGradient>
            </defs>
            <path d="M-1 25L18 2Q19 .5 21 .5H178.5V25" fill="url(#tab)" stroke="#7ba4bf" />
          </TabShape>
          <TabButton>
            <Icon size={15}>{diodeCap}</Icon>
            Schematic Capture
          </TabButton>
          <TabClose aria-label="Close Schematic Capture"><CloseMark /></TabClose>
        </Tab>
        <Tab>
          <TabShape viewBox="0 0 137 24" preserveAspectRatio="none">
            <path d="M0 24V18L11 2.5Q12 1.5 14 1.5H136.5V24" fill="#e6e6e6" stroke="#c4c8cc" />
          </TabShape>
          <TabButton>
            <Icon size={15}>{circuitSheet}</Icon>
            Design Explorer
          </TabButton>
          <TabClose aria-label="Close Design Explorer"><CloseMark /></TabClose>
        </Tab>
      </TabRow>
      <Band />

      <Body>
        <ModeRail>
          <ModeGroup role="toolbar">
            <Grip $across />
            <Modes names={modes} />
          </ModeGroup>
          <ModeGroup role="toolbar">
            <Grip $across />
            <Modes names={["Rotate Clockwise", "Rotate Anticlockwise"]} />
            <AngleInput aria-label="Rotation angle" defaultValue="0°" />
            <Divider $across />
            <Modes names={["X Mirror", "Y Mirror"]} />
          </ModeGroup>
        </ModeRail>

        <SidePanel>
          <Overview>
            <Minimap />
          </Overview>
          <DevicePanel>
            <DeviceHeader>
              <LetterButton aria-label="Pick devices">P</LetterButton>
              <LetterButton aria-label="Manage libraries">L</LetterButton>
              <DeviceTitle>DEVICES</DeviceTitle>
            </DeviceHeader>
            <DeviceList>
              {devices.map((d, i) => (
                <Device key={d} $selected={i === 0}>{d}</Device>
              ))}
            </DeviceList>
          </DevicePanel>
        </SidePanel>

        <CanvasFrame>
          <Schematic />
        </CanvasFrame>
      </Body>
    </Shell>
  );
}
